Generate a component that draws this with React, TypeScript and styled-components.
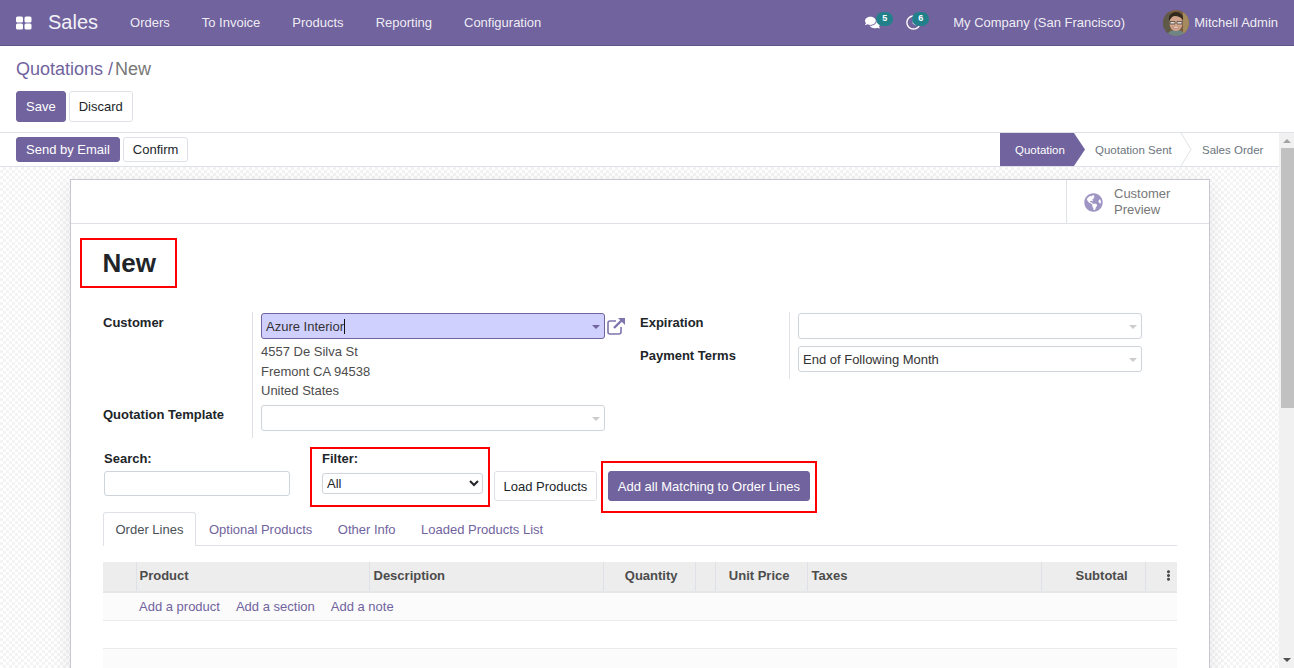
import React from "react";
import styled, { createGlobalStyle } from "styled-components";
import {
  FaComments,
  FaRegClock,
  FaGlobeAmericas,
  FaEllipsisV,
} from "react-icons/fa";

const PRIMARY = "#71639e";

const GlobalStyle = createGlobalStyle`
  html, body {
    margin: 0;
    height: 100%;
    overflow: hidden;
  }
  body {
    font-family: "Liberation Sans", Arial, sans-serif;
    font-size: 13px;
    color: #4c4c4c;
  }
  * {
    box-sizing: border-box;
  }
`;

const Page = styled.div`
  height: 668px;
  display: flex;
  flex-direction: column;
  overflow: hidden;
`;

const NavBar = styled.header`
  height: 46px;
  flex: none;
  display: flex;
  align-items: center;
  background: ${PRIMARY};
  border-bottom: 1px solid #5f5389;
  color: #fff;
  padding: 0 16px;
`;

const AppsIcon = styled.svg`
  width: 16px;
  height: 16px;
  fill: #fff;
  margin-right: 16px;
`;

const Brand = styled.span`
  font-size: 20px;
  margin-right: 16px;
  opacity: 0.92;
`;

const NavItem = styled.span`
  padding: 0 16px;
  color: rgba(255, 255, 255, 0.9);
`;

const Spacer = styled.div`
  flex: 1;
`;

const Systray = styled.div`
  position: relative;
  width: ${(p: { $w: number }) => p.$w}px;
  height: 20px;
  display: flex;
  align-items: center;
  font-size: 15px;
`;

const Badge = styled.span`
  position: absolute;
  top: -1px;
  left: ${(p: { $left: number }) => p.$left}px;
  min-width: 17px;
  height: 14px;
  padding: 0 5px;
  border-radius: 7px;
  background: #21808a;
  color: #fff;
  font-size: 9px;
  font-weight: 700;
  line-height: 13px;
  text-align: center;
`;

const CompanyName = styled.span`
  color: rgba(255, 255, 255, 0.9);
  margin-left: 25px;
  margin-right: 38px;
`;

const Avatar = styled.svg`
  width: 26px;
  height: 26px;
  border-radius: 50%;
  margin-right: 5px;
`;

const UserName = styled.span`
  color: rgba(255, 255, 255, 0.9);
`;

const ControlPanel = styled.div`
  height: 87px;
  flex: none;
  padding: 12px 16px 0;
  background: #fff;
  border-bottom: 1px solid #dee2e6;
`;

const Breadcrumb = styled.div`
  font-size: 18px;
  line-height: 22px;
  height: 33px;
  color: ${PRIMARY};
  span {
    color: #777;
    margin-left: 2px;
  }
`;

const Btn = styled.button<{ $primary?: boolean }>`
  font: inherit;
  height: 31px;
  padding: 0 9px;
  border-radius: 3px;
  border: 1px solid ${(p) => (p.$primary ? PRIMARY : "#dee2e6")};
  background: ${(p) => (p.$primary ? PRIMARY : "#fff")};
  color: ${(p) => (p.$primary ? "#fff" : "#212529")};
`;

const SmallBtn = styled(Btn)`
  height: 25px;
`;

const Row = styled.div`
  display: flex;
  gap: 3px;
`;

const Body = styled.div`
  flex: 1;
  min-height: 0;
  display: flex;
`;

const Scrollable = styled.div`
  flex: 1;
  min-width: 0;
  display: flex;
  flex-direction: column;
`;

const StatusRow = styled.div`
  height: 34px;
  flex: none;
  display: flex;
  align-items: center;
  justify-content: space-between;
  padding-left: 16px;
  background: #fff;
  border-bottom: 1px solid #dee2e6;
`;

const StatusBar = styled.div`
  display: flex;
  height: 33px;
  font-size: 11.5px;
  overflow: hidden;
`;

const Stage = styled.div<{ $active?: boolean; $w: number }>`
  position: relative;
  width: ${(p) => p.$w}px;
  display: flex;
  align-items: center;
  padding-left: ${(p) => (p.$active ? 15 : 10)}px;
  color: ${(p) => (p.$active ? "#fff" : "#6c757d")};
  background: ${(p) => (p.$active ? PRIMARY : "transparent")};
  clip-path: ${(p) =>
    p.$active ? "polygon(0 0, 87% 0, 100% 50%, 87% 100%, 0 100%)" : "none"};
`;

const Chevron = styled.svg`
  position: absolute;
  top: 0;
  right: 0;
  width: 12px;
  height: 33px;
  fill: none;
  stroke: #dee2e6;
`;

const Canvas = styled.main`
  flex: 1;
  min-height: 0;
  overflow: hidden;
  padding: 12px 69px 0 70px;
  background-color: #fff;
  background-image: conic-gradient(
    #f4f4f4 25%,
    #fff 0 50%,
    #f4f4f4 0 75%,
    #fff 0
  );
  background-size: 6px 6px;
`;

const Sheet = styled.section`
  width: 1140px;
  height: 520px;
  background: #fff;
  border: 1px solid #c8c8d3;
  box-shadow: 0 5px 20px rgba(0, 0, 0, 0.09);
`;

const ButtonBox = styled.div`
  height: 44px;
  display: flex;
  justify-content: flex-end;
  border-bottom: 1px solid #dee2e6;
`;

const StatButton = styled.div`
  width: 143px;
  display: flex;
  align-items: center;
  gap: 11px;
  padding: 1px 0 0 17px;
  border-left: 1px solid #dee2e6;
  color: #777;
  line-height: 16px;
  svg {
    width: 19px;
    height: 19px;
    color: #9f95c4;
  }
`;

const SheetBody = styled.div`
  padding: 14px 32px 0 9px;
`;

const TitleBox = styled.div`
  width: 97px;
  height: 50px;
  border: 2px solid #f00;
  padding-left: 20.5px;
  font-size: 26px;
  font-weight: 700;
  line-height: 46px;
  color: #212529;
`;

const FormGrid = styled.div`
  display: grid;
  grid-template-columns: 537px 1fr;
  margin: 24px 0 0 23px;
`;

const FieldGroup = styled.div`
  display: grid;
  grid-template-columns: 150px 352px;
  align-self: start;
`;

const Label = styled.label`
  font-weight: 700;
  color: #212529;
  padding-top: 3px;
  border-right: 1px solid #dee2e6;
  margin-right: -1px;
  width: 150px;
`;

const Value = styled.div`
  padding: 1px 0 0 8px;
  padding-bottom: ${(p: { $bottom?: number }) => p.$bottom ?? 0}px;
`;

const Combo = styled.div<{ $focus?: boolean }>`
  position: relative;
  height: 26px;
  padding-left: 4px;
  display: flex;
  align-items: center;
  border-radius: 3px;
  border: 1px solid ${(p) => (p.$focus ? PRIMARY : "#ced4da")};
  background: ${(p) => (p.$focus ? "#d0d0ff" : "#fff")};
  color: #333;
  &::after {
    content: "";
    position: absolute;
    right: 4px;
    top: 11px;
    border: 4px solid transparent;
    border-bottom-width: 0;
    border-top-color: ${(p) => (p.$focus ? PRIMARY : "#ccc")};
  }
`;

const Caret = styled.span`
  width: 1px;
  height: 15px;
  background: #111;
`;

const ComboWithLink = styled.div`
  position: relative;
`;

const ExternalLink = styled.svg`
  position: absolute;
  top: 3px;
  right: -21px;
  width: 20px;
  height: 20px;
  fill: none;
  stroke: #7d75ad;
`;

const Address = styled.div`
  padding-top: 3px;
  line-height: 19.5px;
  margin-bottom: 3.5px;
`;

const FilterRow = styled.div`
  display: flex;
  align-items: flex-start;
  margin: 9px 0 0 24px;
  height: 65px;
`;

const SearchBlock = styled.div`
  width: 206px;
  padding-top: 4px;
`;

const FieldTitle = styled.div`
  font-weight: 700;
  color: #212529;
  height: 20px;
  line-height: 15px;
`;

const SearchInput = styled.input`
  display: block;
  width: 186px;
  height: 25px;
  border: 1px solid #ced4da;
  border-radius: 3px;
  outline: none;
`;

const FilterBox = styled.div`
  width: 180px;
  height: 60px;
  border: 2px solid #f00;
  padding: 2px 0 0 10px;
  margin-right: 4px;
`;

const FilterSelect = styled.select`
  display: block;
  width: 161px;
  height: 21px;
  margin-top: 2px;
  font: inherit;
  color: #212529;
  background: #fff;
  border: 1px solid #ced4da;
  border-radius: 3px;
`;

const LoadBtn = styled(Btn)`
  height: 30px;
  margin-top: 24px;
  margin-right: 4px;
  padding: 0 8.5px;
`;

const AddBox = styled.div`
  width: 216px;
  height: 52px;
  margin-top: 14px;
  border: 2px solid #f00;
  padding: 8px 0 0 5px;
`;

const AddBtn = styled(Btn)`
  height: 30px;
`;

const Tabs = styled.nav`
  display: flex;
  gap: 0.5px;
  margin-left: 23px;
  height: 34px;
  border-bottom: 1px solid #dee2e6;
`;

const Tab = styled.div<{ $active?: boolean }>`
  height: ${(p) => (p.$active ? 34 : 33)}px;
  padding: 0 11.5px;
  display: flex;
  align-items: center;
  color: ${(p) => (p.$active ? "#495057" : PRIMARY)};
  background: #fff;
  border: 1px solid ${(p) => (p.$active ? "#dee2e6" : "transparent")};
  border-bottom: none;
  border-radius: 3px 3px 0 0;
`;

const LinesTable = styled.table`
  margin: 16px 0 0 23px;
  width: 1074px;
  table-layout: fixed;
  border-collapse: collapse;
`;

const Th = styled.th<{ $right?: boolean }>`
  height: 30px;
  padding: 0 4px 2px;
  background: #ededed;
  border-right: 1px solid #dee2e6;
  border-bottom: 2px solid #e4e7ea;
  font-weight: 700;
  color: #4c4c4c;
  text-align: ${(p) => (p.$right ? "right" : "left")};
  &:last-child {
    border-right: none;
  }
`;

const ProductCell = styled(Th)`
  padding-left: 3px;
`;

const QtyCell = styled(Th)`
  padding-right: 17px;
`;

const MenuCell = styled(Th)`
  padding-right: 3px;
  svg {
    display: block;
    margin-left: auto;
    width: 11px;
    height: 11px;
  }
`;

const Tr = styled.tr<{ $alt?: boolean }>`
  height: 28px;
  background: ${(p) => (p.$alt ? "#fbfbfb" : "#fff")};
  border-bottom: 1px solid #e9ecef;
`;

const AddCell = styled.td`
  padding-left: 3px;
`;

const AddLink = styled.a`
  color: ${PRIMARY};
  margin-right: 16px;
`;

const ScrollBar = styled.aside`
  width: 15px;
  flex: none;
  position: relative;
  background: #f1f1f1;
`;

const ArrowUp = styled.div`
  position: absolute;
  top: 6px;
  left: 4px;
  border: 4px solid transparent;
  border-top-width: 0;
  border-bottom-color: #a3a3a3;
`;

const ArrowDown = styled.div`
  position: absolute;
  bottom: 6px;
  left: 4px;
  border: 4px solid transparent;
  border-bottom-width: 0;
  border-top-color: #505050;
`;

const Thumb = styled.div`
  position: absolute;
  top: 15px;
  left: 2px;
  width: 13px;
  height: 260px;
  background: #c1c1c1;
`;

const menu = ["Orders", "To Invoice", "Products", "Reporting", "Configuration"];
const tabs = ["Order Lines", "Optional Products", "Other Info", "Loaded Products List"];
const colWidths = [33, 233, 234, 92, 20, 92, 234, 104, 32];

export default function App() {
  return (
    <Page>
      <GlobalStyle />
      <NavBar>
        <AppsIcon viewBox="0 0 16 16">
          <rect x="0" y="1.5" width="7" height="6" rx="1.5" />
          <rect x="8.5" y="1.5" width="7" height="6" rx="1.5" />
          <rect x="0" y="8.5" width="7" height="6" rx="1.5" />
          <rect x="8.5" y="8.5" width="7" height="6" rx="1.5" />
        </AppsIcon>
        <Brand>Sales</Brand>
        {menu.map((m) => (
          <NavItem key={m}>{m}</NavItem>
        ))}
        <Spacer />
        <Systray $w={41}>
          <FaComments />
          <Badge $left={11}>5</Badge>
        </Systray>
        <Systray $w={22}>
          <FaRegClock />
          <Badge $left={6}>6</Badge>
        </Systray>
        <CompanyName>My Company (San Francisco)</CompanyName>
        <Avatar viewBox="0 0 26 26">
          <rect width="26" height="26" fill="#7a5c3e" />
          <rect x="0" y="0" width="7" height="26" fill="#5f5a48" />
          <rect x="20" y="0" width="6" height="26" fill="#a58a5e" />
          <path d="M4 26c1-5 5-6 9-6s8 1 9 6z" fill="#6f8484" />
          <ellipse cx="13" cy="13" rx="6.5" ry="8" fill="#d2a48c" />
          <path d="M6 11c-1-6 3-9 7-9s8 3 7 8c-2-3-5-4-8-4s-4 2-6 5z" fill="#33291f" />
          <path d="M7 11.5h5v2.5H7zM14 11.5h5v2.5h-5z" fill="#e8d5c8" stroke="#3a3a3a" strokeWidth="0.7" />
          <path d="M9.5 17c2 1.5 5 1.5 7 0" fill="#fff" stroke="#8d5a4a" strokeWidth="0.6" />
        </Avatar>
        <UserName>Mitchell Admin</UserName>
      </NavBar>

      <ControlPanel>
        <Breadcrumb>
          Quotations /<span>New</span>
        </Breadcrumb>
        <Row>
          <Btn $primary>Save</Btn>
          <Btn>Discard</Btn>
        </Row>
      </ControlPanel>

      <Body>
        <Scrollable>
          <StatusRow>
            <Row>
              <SmallBtn $primary>Send by Email</SmallBtn>
              <SmallBtn>Confirm</SmallBtn>
            </Row>
            <StatusBar>
              <Stage $active $w={85}>
                Quotation
              </Stage>
              <Stage $w={107}>
                Quotation Sent
                <Chevron viewBox="0 0 12 33">
                  <path d="M1 0l10 16.5L1 33" />
                </Chevron>
              </Stage>
              <Stage $w={87}>Sales Order</Stage>
            </StatusBar>
          </StatusRow>

          <Canvas>
            <Sheet>
              <ButtonBox>
                <StatButton>
                  <FaGlobeAmericas />
                  <div>
                    Customer
                    <br />
                    Preview
                  </div>
                </StatButton>
              </ButtonBox>

              <SheetBody>
                <TitleBox>New</TitleBox>

                <FormGrid>
                  <FieldGroup>
                    <Label>Customer</Label>
                    <Value>
                      <ComboWithLink>
                        <Combo $focus>
                          Azure Interior
                          <Caret />
                        </Combo>
                        <ExternalLink viewBox="0 0 20 20">
                          <path d="M15 11v5a2 2 0 0 1-2 2H4a2 2 0 0 1-2-2V7a2 2 0 0 1 2-2h6" strokeWidth="1.6" />
                          <path d="M8 12l9-9" strokeWidth="2.4" />
                          <path d="M12 2h7v7z" fill="#7d75ad" stroke="none" />
                        </ExternalLink>
                      </ComboWithLink>
                      <Address>
                        4557 De Silva St
                        <br />
                        Fremont CA 94538
                        <br />
                        United States
                      </Address>
                    </Value>
                    <Label>Quotation Template</Label>
                    <Value $bottom={7}>
                      <Combo />
                    </Value>
                  </FieldGroup>

                  <FieldGroup>
                    <Label>Expiration</Label>
                    <Value $bottom={6}>
                      <Combo />
                    </Value>
                    <Label>Payment Terms</Label>
                    <Value $bottom={7}>
                      <Combo>End of Following Month</Combo>
                    </Value>
                  </FieldGroup>
                </FormGrid>

                <FilterRow>
                  <SearchBlock>
                    <FieldTitle>Search:</FieldTitle>
                    <SearchInput />
                  </SearchBlock>
                  <FilterBox>
                    <FieldTitle>Filter:</FieldTitle>
                    <FilterSelect defaultValue="All">
                      <option>All</option>
                    </FilterSelect>
                  </FilterBox>
                  <LoadBtn>Load Products</LoadBtn>
                  <AddBox>
                    <AddBtn $primary>Add all Matching to Order Lines</AddBtn>
                  </AddBox>
                </FilterRow>

                <Tabs>
                  {tabs.map((t, i) => (
                    <Tab key={t} $active={i === 0}>
                      {t}
                    </Tab>
                  ))}
                </Tabs>

                <LinesTable>
                  <colgroup>
                    {colWidths.map((w, i) => (
                      <col key={i} width={w} />
                    ))}
                  </colgroup>
                  <thead>
                    <tr>
                      <Th />
                      <ProductCell>Product</ProductCell>
                      <Th>Description</Th>
                      <QtyCell $right>Quantity</QtyCell>
                      <Th />
                      <QtyCell $right>Unit Price</QtyCell>
                      <Th>Taxes</Th>
                      <QtyCell $right>Subtotal</QtyCell>
                      <MenuCell>
                        <FaEllipsisV />
                      </MenuCell>
                    </tr>
                  </thead>
                  <tbody>
                    <Tr $alt>
                      <td />
                      <AddCell colSpan={8}>
                        <AddLink>Add a product</AddLink>
                        <AddLink>Add a section</AddLink>
                        <AddLink>Add a note</AddLink>
                      </AddCell>
                    </Tr>
                    <Tr>
                      <td colSpan={9} />
                    </Tr>
                    <Tr $alt>
                      <td colSpan={9} />
                    </Tr>
                  </tbody>
                </LinesTable>
              </SheetBody>
            </Sheet>
          </Canvas>
        </Scrollable>
        <ScrollBar>
          <ArrowUp />
          <Thumb />
          <ArrowDown />
        </ScrollBar>
      </Body>
    </Page>
  );
}
